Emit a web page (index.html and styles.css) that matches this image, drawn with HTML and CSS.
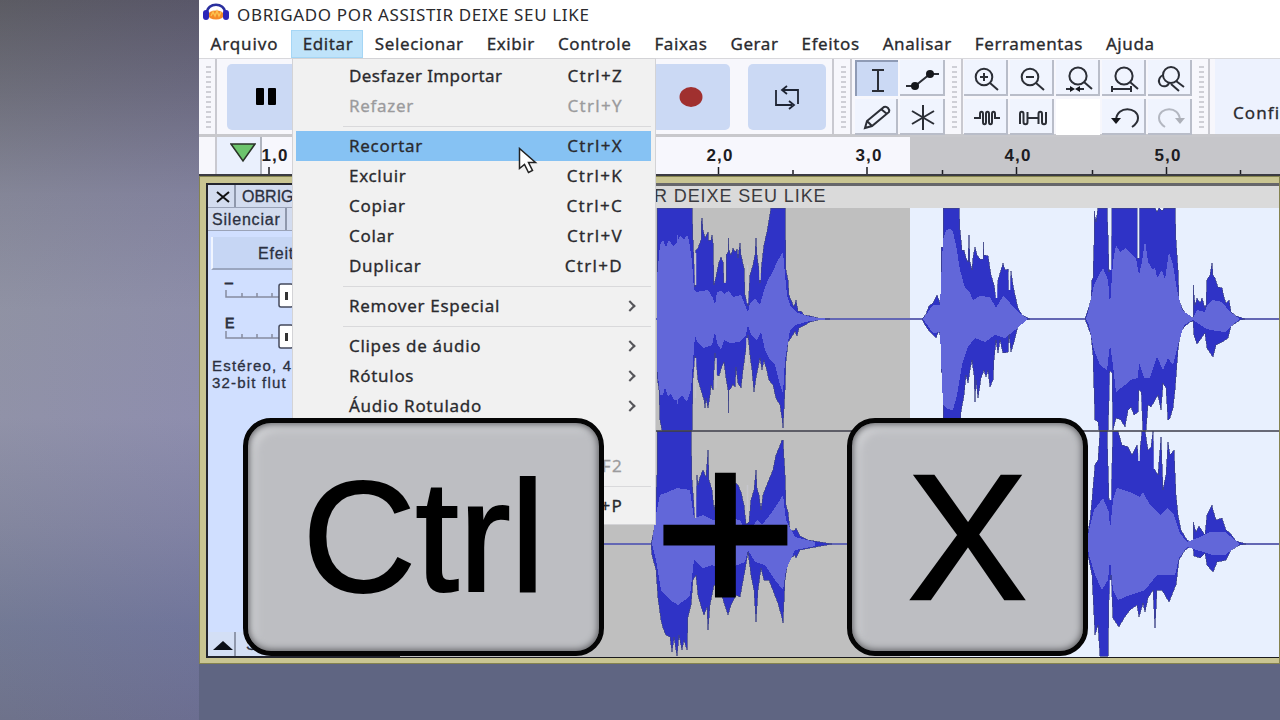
FILE: index.html
```html
<!DOCTYPE html>
<html lang="pt-BR">

<head>
  <meta charset="UTF-8">
  <meta name="viewport" content="width=device-width, initial-scale=1.0">
  <title>Recortar - Ctrl + X</title>
  <link rel="stylesheet" href="styles.css">
</head>

<body>
  <div class="backdrop"></div>

  <div class="window">
    <div class="titlebar">
      <svg class="app-icon" width="28" height="18" viewBox="0 0 28 18">
        <ellipse cx="14" cy="12" rx="8" ry="4.500" fill="#f58a28"/>
        <path d="M9 13l2-4 2 4 2-5 2 5 2-4" fill="none" stroke="#fbc04e" stroke-width="1.5"/>
        <path d="M5 10C5-1 23-1 23 10" fill="none" stroke="#2a2f9e" stroke-width="2.5"/>
        <rect x="1" y="7" width="6" height="10" rx="3" fill="#2c25b8"/>
        <rect x="21" y="7" width="6" height="10" rx="3" fill="#2c25b8"/>
      </svg>
      <span class="title">OBRIGADO POR ASSISTIR DEIXE SEU LIKE</span>
    </div>

    <div class="menubar">
      <span class="first">Arquivo</span>
      <span class="open">Editar</span>
      <span>Selecionar</span>
      <span>Exibir</span>
      <span>Controle</span>
      <span>Faixas</span>
      <span>Gerar</span>
      <span>Efeitos</span>
      <span>Analisar</span>
      <span>Ferramentas</span>
      <span>Ajuda</span>
    </div>

    <div class="toolbar">
      <div class="grip"></div>
      <div class="transport">
        <div class="big-btn">
          <svg width="78" height="66" viewBox="0 0 78 66"><rect x="29" y="24" width="8" height="17" rx="1"/><rect x="41" y="24" width="8" height="17" rx="1"/></svg>
        </div>
        <div class="big-btn record">
          <svg width="78" height="66" viewBox="0 0 78 66"><ellipse cx="39" cy="33" rx="11.5" ry="10" fill="#a0302f"/></svg>
        </div>
        <div class="big-btn">
          <svg width="78" height="66" viewBox="0 0 78 66" fill="none" stroke="#1e2433" stroke-width="1.8">
            <path d="M28 26v15h16M50 40V26H35"/>
            <path d="M39 22l-5 4 5 4M41 37l5 4-5 4"/>
          </svg>
        </div>
      </div>
      <div class="grip"></div>
      <div class="tools">
        <div class="cell pressed"><svg viewBox="0 0 44 36"><path d="M17 10h12M17 31h12M23 10v21"/></svg></div>
        <div class="cell"><svg viewBox="0 0 44 36"><path d="M6 26h9L30 14h9"/><circle class="dot" cx="15" cy="26" r="4"/><circle class="dot" cx="30" cy="14" r="4"/></svg></div>
        <div class="cell"><svg viewBox="0 0 44 36"><path d="M10 29l2-7L29 8c3-1 6 2 5 5L17 27zM12 22l5 5M26 10l6 5"/></svg></div>
        <div class="cell"><svg viewBox="0 0 44 36"><path d="M23 6v25M12 12l22 13M34 12L12 25"/></svg></div>
      </div>
      <div class="grip"></div>
      <div class="zoom">
        <div class="cell"><svg viewBox="0 0 44 36"><circle cx="20" cy="17" r="8.300"/><path d="M26 23l8 7M16 17h8M20 13v8"/></svg></div>
        <div class="cell"><svg viewBox="0 0 44 36"><circle cx="20" cy="17" r="8.300"/><path d="M26 23l8 7M16 17h8"/></svg></div>
        <div class="cell"><svg viewBox="0 0 44 36"><circle cx="22" cy="16" r="8.600"/><path d="M28 22l8 7M10 29h7M28 29h-7"/><path class="dot" d="M19 29l-5-3v6zM19 29l5-3v6z"/></svg></div>
        <div class="cell"><svg viewBox="0 0 44 36"><circle cx="22" cy="16" r="8.600"/><path d="M28 22l8 7M10 29h19M10 26v6M29 26v6"/></svg></div>
        <div class="cell"><svg viewBox="0 0 44 36"><circle cx="23" cy="15" r="8"/><path d="M15 15c-7 4-4 13 3 11 3-1 3-4 3-4M28 21l8 6M23 24l8 7"/></svg></div>
        <div class="cell"><svg viewBox="0 0 44 36"><path d="M10 19h6v-4c0-3 3-3 3 0v8c0 3 3 3 3 0v-8c0-3 3-3 3 0v8c0 3 3 3 3 0v-8c0-3 3-3 3 0v4h5"/></svg></div>
        <div class="cell"><svg viewBox="0 0 44 36"><path d="M10 25V15c0-3 3.500-3 3.500 0v8c0 3 4 3 4 0V13M17.500 19h11M28.500 25V15c0-3 3.500-3 3.500 0v8c0 3 4 3 4 0V13"/></svg></div>
        <div class="cell empty"></div>
        <div class="cell"><svg viewBox="0 0 44 36"><path d="M14 21c1-15 22-13 22-2 0 4-3 7-6 9"/><path class="dot" d="M9 19h10l-5 6z"/></svg></div>
        <div class="cell disabled"><svg viewBox="0 0 44 36"><path d="M32 21c-1-15-21-13-21-2 0 4 3 7 6 9"/><path class="dot" d="M27 19h10l-5 6z"/></svg></div>
      </div>
      <div class="grip"></div>
      <div class="audio-setup">Confi</div>
    </div>

    <div class="timeline">
      <div class="corner"></div>
      <div class="pin"><svg width="26" height="20" viewBox="0 0 26 20"><path d="M1 1h24L13 18z" fill="#6cc46c" stroke="#2a3328" stroke-width="1.5"/></svg></div>
      <svg class="ruler" width="1018" height="37" viewBox="262 137 1018 37">
        <rect x="262" y="137" width="648" height="37" fill="#f7f7fd"/>
        <rect x="910" y="137" width="370" height="37" fill="#c6c6ca"/>
        <path d="M269 167v8M718.500 167v8M867 167v8M1016.500 167v8M1166.500 167v8M793 170v5M942.500 170v5M1092.500 170v5M1240.500 170v5" stroke="#1c1c22" stroke-width="1.500"/>
        <g class="ruler-text">
          <text x="275" y="161">1,0</text>
          <text x="720" y="161">2,0</text>
          <text x="869" y="161">3,0</text>
          <text x="1018" y="161">4,0</text>
          <text x="1168" y="161">5,0</text>
        </g>
      </svg>
    </div>

    <div class="track">
      <div class="panel">
        <div class="panel-row">
          <div class="close"><svg width="14" height="12" viewBox="0 0 14 12"><path d="M1 1l12 10M13 1L1 11" stroke="#111" stroke-width="2"/></svg></div>
          <div class="name">OBRIG</div>
        </div>
        <div class="panel-row">
          <div class="mute">Silenciar</div>
          <div class="solo"></div>
        </div>
        <div class="effects">Efeit</div>
        <div class="slider">
          <span>–</span>
          <svg width="70" height="26" viewBox="0 0 70 26"><path d="M1 7v7h60M17 10v4M32 10v4M47 10v4" fill="none" stroke="#858ca0" stroke-width="1.500"/><rect x="54" y="1" width="14" height="23" rx="2" fill="#fff" stroke="#444a5c" stroke-width="1.500"/><path d="M61.500 9v8" stroke="#333" stroke-width="3"/></svg>
        </div>
        <div class="slider">
          <span>E</span>
          <svg width="70" height="26" viewBox="0 0 70 26"><path d="M1 7v7h60M17 10v4M32 10v4M47 10v4" fill="none" stroke="#858ca0" stroke-width="1.500"/><rect x="54" y="1" width="14" height="23" rx="2" fill="#fff" stroke="#444a5c" stroke-width="1.500"/><path d="M61.500 9v8" stroke="#333" stroke-width="3"/></svg>
        </div>
        <div class="info">Estéreo, 4<br>32-bit flut</div>
        <div class="panel-foot">
          <div class="collapse"><svg width="20" height="10" viewBox="0 0 20 10"><path d="M10 0l10 9H0z" fill="#0c1018"/></svg></div>
          <div class="select">S</div>
        </div>
      </div>

      <div class="clip">
        <div class="clip-title">R DEIXE SEU LIKE</div>
        <svg class="waves" width="880" height="449" viewBox="400 208 880 449">
          <rect x="400" y="208" width="510" height="449" fill="#bfbfbf"/>
          <rect x="910" y="208" width="370" height="449" fill="#e8f0fe"/>
          <path d="M400 319H1280M400 544H1280" stroke="#6367b4" stroke-width="2"/>

          <!-- left channel, peaks -->
          <g class="peak">
            <path d="M657 208H692L693 240 695 287 696 250 698 248 701 240 701 225 702 218 703 230 705 238 708 232 708 240 711 240 712 235 713 243 714 285 716 277 719 262 721 257 723 262 724 283 726 281 726 255 728 252 728 238 729 250 731 255 733 248 735 252 737 249 738 258 740 243 741 255 744 268 745 295 748 306 750 275 753 265 755 255 756 238 757 255 759 270 760 283 762 262 764 245 767 232 769 220 771 208H785L786 270 788 280 789 295 791 300 794 307 796 300 798 311 801 311 804 315 810 316 818 318 830 319 818 320 810 322 803 326 799 328 797 336 795 331 791 338 788 342 786 361 785 390 783 428 782 418 780 405 776 398 773 385 769 380 767 371 764 360 762 370 760 358 758 368 756 378 754 392 752 370 750 355 748 335 745 355 743 370 741 388 738 383 736 367 735 387 733 384 731 388 729 390 728 413 728 390 726 378 724 362 722 366 719 376 717 375 715 353 714 370 713 390 711 385 710 395 708 408 706 398 705 408 704 400 701 390 698 380 697 370 695 356 693 378 692 430H662L660 420 659 390 657 375z"/>
            <path d="M922 319L926 314 929 306 933 303 937 295 939 300 941 308V247H943V208H959L960 230 962 250 964 250 966 258 968 262 969 235 970 262 972 270 973 258 975 247 977 255 980 259 983 259 983 242 984 255 988 256 991 275 994 285 996 298 998 280 1001 270 1003 263 1005 270 1008 269 1009 290 1011 271 1013 285 1015 295 1018 308 1022 315 1030 319 1022 321 1018 326 1014 342 1011 352 1009 334 1008 352 1003 353 1000 340 998 353 996 340 994 360 993 380 990 387 988 370 986 377 984 370 981 378 978 398 976 380 975 402 974 375 972 360 970 370 968 383 966 375 964 395 961 412 960 430H943V372H941V340L939 330 936 338 930 332 925 325z"/>
            <path d="M1085 319L1088 310 1091 300 1092 280 1093 278 1094 245V211L1096 222 1098 208H1107L1108 235 1109 272 1111 265 1112 208H1137V258H1139V208H1155L1157 212 1159 208 1162 211 1164 208H1175L1176 240 1178 270 1179 300 1182 308 1187 316 1193 318V285L1195 305 1197 298 1200 303 1202 298 1205 308 1206 305 1207 280 1210 275 1212 263 1213 275 1215 278 1218 287 1222 288 1224 297 1226 303 1229 300 1231 312 1236 316 1245 319 1240 320 1231 326 1228 338 1222 342 1216 345 1213 357 1207 348 1205 333 1200 340 1197 344 1194 335 1193 321 1190 322 1185 326 1180 333 1178 350 1175 390 1173 408 1170 418 1168 420 1166 388 1163 383 1161 410 1158 395 1155 400 1151 407 1148 405 1146 430H1143L1141 392 1139 390 1138 412 1134 415 1131 407 1128 410 1125 427 1121 420 1116 418 1113 430 1112 373 1110 371 1108 430H1099L1098 422 1095 420 1093 355 1091 335 1087 324z"/>
          </g>
          <!-- left channel, rms -->
          <g class="rms">
            <path d="M657 277L660 245 663 240 666 247 669 240 673 246 677 242V230L678 240 680 236 684 240 687 235 689 240 692 262 694 290 697 292 701 291 708 290 713 298 715 305 717 292 721 291 724 294 729 291 733 297 741 295 745 305 748 312 750 303 755 298 760 305 764 290 768 280 772 273 778 260 783 252 785 275 787 295 790 305 796 312 810 317 830 319 810 321 795 325 790 330 785 360 783 393 780 385 775 365 770 360 765 350 761 332 757 340 751 335 748 325 746 335 740 342 730 343 724 340 721 350 717 343 715 332 712 345 703 348 697 342 695 335 693 362 691 390 687 402 682 395 678 400V408L677 400 674 400 671 394 668 396 665 387 663 395 660 395 657 367z"/>
            <path d="M923 319L933 305 940 305 943 240 946 230 950 229 953 232 956 245 960 270 965 288 970 293 973 300 980 296 990 297 996 308 1003 296 1010 303 1018 312 1028 319 1015 330 1005 338 995 335 985 342 975 338 968 347 962 365 957 395 953 410 947 409 943 405 940 332 933 333z"/>
            <path d="M1086 319L1088 312 1094 285 1099 275 1103 268 1108 280 1110 305 1113 262 1116 245 1120 252 1126 248 1130 253 1136 258 1139 275 1142 262 1145 240 1148 262 1153 270 1155 267 1157 278 1162 270 1165 280 1169 252 1173 265 1177 290 1182 310 1193 318 1197 310 1205 312 1207 305 1212 300 1222 302 1230 312 1240 319 1232 325 1225 332 1210 330 1205 328 1193 320 1184 325 1178 345 1173 365 1168 358 1163 370 1157 357 1150 378 1144 378 1139 362 1138 378 1130 380 1125 385 1116 392 1113 365 1110 345 1107 370 1100 365 1094 350 1089 325z"/>
          </g>

          <!-- right channel, peaks -->
          <g class="peak">
            <path d="M651 544L653 535 655 525 657 475V431H691L692 480 695 520 697 475 698 485 700 477 703 470 706 477 708 450 709 480 712 490 714 510 716 500 724 480 735 483 738 485 741 492 744 505 746 524 749 522 751 500 754 490 756 470 757 488 759 495 761 510 763 495 768 482 773 470 776 455 779 448 782 440 783 440 785 475 786 505 788 512 790 530 794 531 796 528 800 536 808 540 820 542 832 544 810 548 800 550 796 558 795 555 788 560 785 580 783 623 782 618 778 603 774 593 769 580 764 580 761 568 758 590 756 622 754 590 751 575 748 552 745 570 740 597 736 595 731 605 728 615 720 590 714 585 710 605 708 630 707 607 704 615 701 606 698 595 696 575 693 580 691 605 688 617 687 650 684 640 682 650 679 635 677 656 674 637 672 652 670 637 666 635 663 628 661 620 658 598 656 570 652 555z"/>
            <path d="M1086 544L1090 520 1092 500 1095 465 1098 460 1100 431H1107L1109 500 1111 495 1113 431H1118L1122 445 1128 447 1132 455 1137 445 1139 460 1142 431H1145L1148 450 1151 447 1153 431 1155 470 1158 475 1161 437 1163 490 1166 475 1168 442 1170 455 1174 450 1176 495 1178 515 1181 530 1187 540 1193 544V522L1196 532 1199 526 1205 535 1207 515 1212 505 1213 510 1216 520 1222 518 1226 530 1230 533 1236 541 1246 544 1240 545 1231 550 1226 560 1217 562 1213 572 1207 565 1205 553 1200 558 1194 556 1193 545 1185 550 1179 560 1176 585 1173 592 1169 602 1162 590 1157 590 1155 628 1153 590 1148 598 1145 612 1143 603 1139 617 1137 605 1130 610 1124 618 1119 627 1113 618 1111 575 1109 600 1108 656H1100L1098 625 1095 635 1092 575 1088 555z"/>
          </g>
          <!-- right channel, rms -->
          <g class="rms">
            <path d="M652 544L655 520 660 495 668 492 677 488 690 490 694 518 703 515 713 520 724 517 740 520 748 535 757 520 762 525 772 512 780 500 783 495 786 520 795 537 815 542 815 546 795 550 786 570 783 590 775 580 765 565 755 562 748 550 745 562 725 570 712 565 703 568 694 560 690 595 685 600 678 605 670 600 661 590 656 560z"/>
            <path d="M1087 544L1089 530 1094 510 1103 498 1109 512 1110 530 1113 500 1117 488 1130 492 1140 497 1143 492 1150 505 1160 515 1168 508 1174 515 1180 533 1187 542 1200 537 1210 532 1225 532 1240 544 1225 555 1212 555 1200 551 1187 547 1179 558 1175 575 1157 575 1145 590 1130 595 1118 600 1113 590 1110 560 1108 580 1102 590 1095 575 1089 555z"/>
          </g>

          <!-- thin gaps between peaks -->
          <path class="gap" d="M695.500 253v32M725 258v25M747.500 265v38M760 258v22M695.500 358v40M716 358v30M747 338v28M695.500 480v38M747.500 485v34"/>
          <path class="gap light" d="M1110.500 208v62M1138.500 208v50M1110.500 373v57M1140.500 395v35M1009.500 272v18M996.500 270v28M1110.500 440v60M1139 433v28M1154.500 433v36M1110.500 580v76"/>
          <path d="M400 431H1280" stroke="#3c3c48" stroke-width="1.500"/>
        </svg>
      </div>
    </div>
  </div>

  <div class="menu">
    <div class="item">Desfazer Importar<kbd>Ctrl+Z</kbd></div>
    <div class="item off">Refazer<kbd>Ctrl+Y</kbd></div>
    <div class="sep"></div>
    <div class="item hover">Recortar<kbd>Ctrl+X</kbd></div>
    <div class="item">Excluir<kbd>Ctrl+K</kbd></div>
    <div class="item">Copiar<kbd>Ctrl+C</kbd></div>
    <div class="item">Colar<kbd>Ctrl+V</kbd></div>
    <div class="item">Duplicar<kbd>Ctrl+D</kbd></div>
    <div class="sep"></div>
    <div class="item sub">Remover Especial</div>
    <div class="sep"></div>
    <div class="item sub">Clipes de áudio</div>
    <div class="item sub">Rótulos</div>
    <div class="item sub">Áudio Rotulado</div>
    <div class="item"></div>
    <div class="item off"><kbd>F2</kbd></div>
    <div class="sep"></div>
    <div class="item"><kbd>+P</kbd></div>
  </div>

  <svg class="cursor" width="20" height="28" viewBox="0 0 20 28"><path d="M1.500 1.500v20l5-4 4 8 4-2-4-8h7z" fill="#fff" stroke="#222" stroke-width="1.500"/></svg>

  <div class="shortcut">
    <div class="key key-ctrl">Ctrl</div>
    <div class="plus">+</div>
    <div class="key key-x">X</div>
  </div>
</body>

</html>
```
FILE: styles.css
```css
* {
  box-sizing: border-box;
}

body {
  margin: 0;
  width: 1280px;
  height: 720px;
  overflow: hidden;
  display: flex;
  position: relative;
  background: #5f6582;
  font-family: "Noto Sans", "Open Sans", sans-serif;
  color: #2a2a2e;
}

.backdrop {
  width: 199px;
  background:
    linear-gradient(to right, rgba(140, 145, 130, 0.12), rgba(120, 110, 180, 0.12)),
    linear-gradient(#55545f, #6a6a7a 13%, #83849a 27%, #9092a8 43%, #9192ad 58%, #8285a2 73%, #6f7697 87%, #6a6e8c);
}

.window {
  width: 1081px;
  height: 664px;
  overflow: hidden;
  background: #fff;
}

.titlebar {
  height: 30px;
  display: flex;
  padding-left: 3px;
}

.app-icon {
  margin-top: 3px;
}

.title {
  margin-left: 7px;
  font-size: 17px;
  line-height: 30px;
  letter-spacing: 0.65px;
  white-space: nowrap;
}

.menubar {
  height: 28px;
  display: flex;
  font-size: 17px;
  line-height: 28px;
  letter-spacing: 0.6px;
  -webkit-text-stroke: 0.3px #2a2a2e;
}

.menubar span {
  padding: 0 11.5px;
  white-space: nowrap;
}

.menubar .first {
  padding-right: 13px;
  letter-spacing: 0.85px;
}

.menubar .open {
  background: #bfe3fa;
  border: 1px solid #a5d6f5;
  padding: 0 9px 0 10.5px;
  line-height: 26px;
}

/* toolbars */
.toolbar {
  height: 79px;
  display: flex;
  background: #f7f7fc;
  border-top: 1px solid #d8d8dc;
  border-bottom: 3px solid #c8c8cc;
}

.grip {
  width: 18px;
  flex: none;
  border-right: 2px solid #c9c9d0;
  padding: 7px 4px 4px 7px;
}

.grip::before {
  content: "";
  display: block;
  height: 64px;
  background: repeating-linear-gradient(#cfcfd6 0 2px, transparent 2px 5px);
}

.transport {
  width: 617px;
  flex: none;
  display: flex;
  gap: 18px;
  padding: 5px 6px 0 10px;
  border-right: 2px solid #c9c9d0;
}

.big-btn {
  width: 78px;
  height: 66px;
  flex: none;
  border-radius: 5px;
  background: #cbd9f4;
}

.record {
  margin-left: auto;
}

.tools,
.zoom {
  display: grid;
  flex: none;
  grid-auto-rows: 36px;
  row-gap: 3px;
  padding-top: 1px;
}

.tools {
  grid-template-columns: 43px 45px;
  column-gap: 2px;
  margin-left: 3px;
}

.zoom {
  grid-template-columns: repeat(5, 44px);
  column-gap: 2px;
  margin-left: 1px;
}

.cell {
  background: #f0f4fe;
  border-right: 2px solid #b9bdc9;
  border-bottom: 2px solid #b9bdc9;
}

.cell svg {
  display: block;
  width: 44px;
  height: 36px;
  fill: none;
  stroke: #2b2e36;
  stroke-width: 2;
}

.cell .dot {
  fill: #15171c;
  stroke: none;
}

.pressed {
  background: #cbd9f4;
  border: 0 solid #8f9bb5;
  border-width: 2px 0 0 2px;
}

.pressed svg {
  margin: -2px 0 0 -2px;
}

.disabled svg {
  opacity: 0.3;
}

.empty {
  background: #fff;
  border: none;
}

.audio-setup {
  margin-left: 5px;
  padding-left: 18px;
  flex: 1;
  overflow: hidden;
  background: #edf2fe;
  font-size: 17px;
  line-height: 107px;
  letter-spacing: 1.1px;
  white-space: nowrap;
  -webkit-text-stroke: 0.3px #2a2a2e;
}

/* ruler */
.timeline {
  height: 39px;
  display: flex;
  background: #f7f7fc;
  border-bottom: 2px solid #3b3b42;
}

.corner {
  width: 18px;
  border-right: 2px solid #c9c9d0;
}

.pin {
  width: 45px;
  display: flex;
  padding: 6px 0 0 13px;
  background: #eaf0fd;
  border-right: 2px solid #b0b4be;
}

.ruler-text {
  font: bold 17px "Liberation Sans", Arial, sans-serif;
  letter-spacing: 1.2px;
  text-anchor: middle;
  fill: #1c1c22;
}

/* track */
.track {
  height: 488px;
  display: flex;
  border: 7px solid #c9c592;
  border-right: none;
  border-bottom-width: 6px;
  outline: 1px solid #85834f;
  outline-offset: -1px;
  font-family: "Liberation Sans", Arial, sans-serif;
}

.panel {
  width: 194px;
  flex: none;
  display: flex;
  flex-direction: column;
  background: #d0dfff;
  border: 2px solid #23252e;
  border-right: none;
  font-size: 16px;
  color: #2b3040;
  -webkit-text-stroke: 0.3px #2b3040;
}

.panel-row {
  height: 23px;
  display: flex;
  line-height: 24px;
  background: #d3dcef;
  border-bottom: 1px solid #9aa3b8;
}

.close {
  width: 28px;
  display: flex;
  align-items: center;
  justify-content: center;
  padding: 2px 0 0 4px;
  border-right: 2px solid #8f98ac;
}

.name {
  padding-left: 6px;
}

.mute {
  width: 79px;
  padding-left: 4px;
  letter-spacing: 0.8px;
  border-right: 2px solid #8f98ac;
}

.effects {
  height: 33px;
  margin: 6px 0 13px 3px;
  padding-left: 45px;
  line-height: 33px;
  letter-spacing: 0.8px;
  background: #c6d6f4;
  border-left: 2px solid #f0f5ff;
  border-bottom: 2px solid #9aa6bf;
}

.slider {
  height: 41px;
  padding-left: 17px;
  position: relative;
}

.slider span {
  position: absolute;
  top: -9px;
  left: 17px;
  font-size: 14px;
  -webkit-text-stroke: 0.8px #2b3040;
}

.info {
  padding: 0 0 0 4px;
  margin-top: -7px;
  font-size: 15px;
  line-height: 16.5px;
  letter-spacing: 1.2px;
}

.panel-foot {
  margin-top: auto;
  height: 24px;
  display: flex;
}

.collapse {
  width: 28px;
  padding: 5px 0 0 5px;
  background: #d3dff5;
  border-right: 2px solid #8f98ac;
}

.select {
  flex: 1;
  padding: 4px 0 0 10px;
  background: #d3dff5;
}

.clip {
  width: 880px;
  flex: none;
  border-top: 3px solid #66666a;
  border-bottom: 2px solid #1b1b1f;
}

.clip-title {
  height: 22px;
  padding-left: 254px;
  background: #dadada;
  color: #3a3a40;
  font-size: 18px;
  line-height: 21px;
  letter-spacing: 0.9px;
  white-space: nowrap;
}

.waves {
  display: block;
}

.peak {
  fill: #2f33c6;
  stroke: #3f4488;
  stroke-width: 0.7;
  shape-rendering: crispEdges;
}

.rms {
  fill: #6267d9;
  shape-rendering: crispEdges;
}

.gap {
  stroke: #c6c6cc;
  stroke-width: 1.5;
}

.light {
  stroke: #e8f0fe;
}

/* edit menu */
.menu {
  position: absolute;
  left: 292px;
  top: 58px;
  width: 364px;
  height: 467px;
  padding: 2px 4px 2px 3px;
  background: #f1f1f1;
  border: 1px solid #d3d3d6;
  font-size: 17px;
  -webkit-text-stroke: 0.3px;
}

.item {
  display: flex;
  height: 30px;
  padding: 0 28px 0 53px;
  line-height: 29px;
  letter-spacing: 0.7px;
}

.item:first-child {
  letter-spacing: 0.4px;
}

.item kbd {
  margin-left: auto;
  font-family: inherit;
  letter-spacing: 1.3px;
}

.off {
  color: #9b9b9d;
}

.hover {
  background: #86c2f3;
}

.sep {
  height: 10px;
  margin-left: 47px;
  background: linear-gradient(#d9d9db, #d9d9db) 0 5px / 100% 1px no-repeat;
}

.sub::after {
  content: "";
  width: 6px;
  height: 6px;
  margin: 11px -11px 0 auto;
  border-top: 2px solid #55555a;
  border-right: 2px solid #55555a;
  transform: rotate(45deg);
}

.cursor {
  position: absolute;
  left: 518px;
  top: 147px;
}

/* big keys over everything */
.shortcut {
  position: absolute;
  left: 243px;
  top: 418px;
  width: 845px;
  height: 238px;
  display: flex;
  justify-content: space-between;
  font-family: "Liberation Sans", Arial, sans-serif;
  color: #000;
}

.key {
  height: 238px;
  border: 5px solid #050505;
  border-radius: 28px;
  background: #bdbec2;
  box-shadow: inset 0 0 7px 1px #55565a, inset 7px 7px 8px #d2d3d6;
  text-align: center;
}

.key-ctrl {
  width: 361px;
  font-size: 157px;
  line-height: 228px;
  letter-spacing: -0.5px;
  -webkit-text-stroke: 2px #000;
}

.key-x {
  width: 241px;
  font-size: 179px;
  line-height: 228px;
  -webkit-text-stroke: 2.5px #000;
}

.plus {
  font-size: 249px;
  line-height: 228px;
  -webkit-text-stroke: 3px #000;
}
```
